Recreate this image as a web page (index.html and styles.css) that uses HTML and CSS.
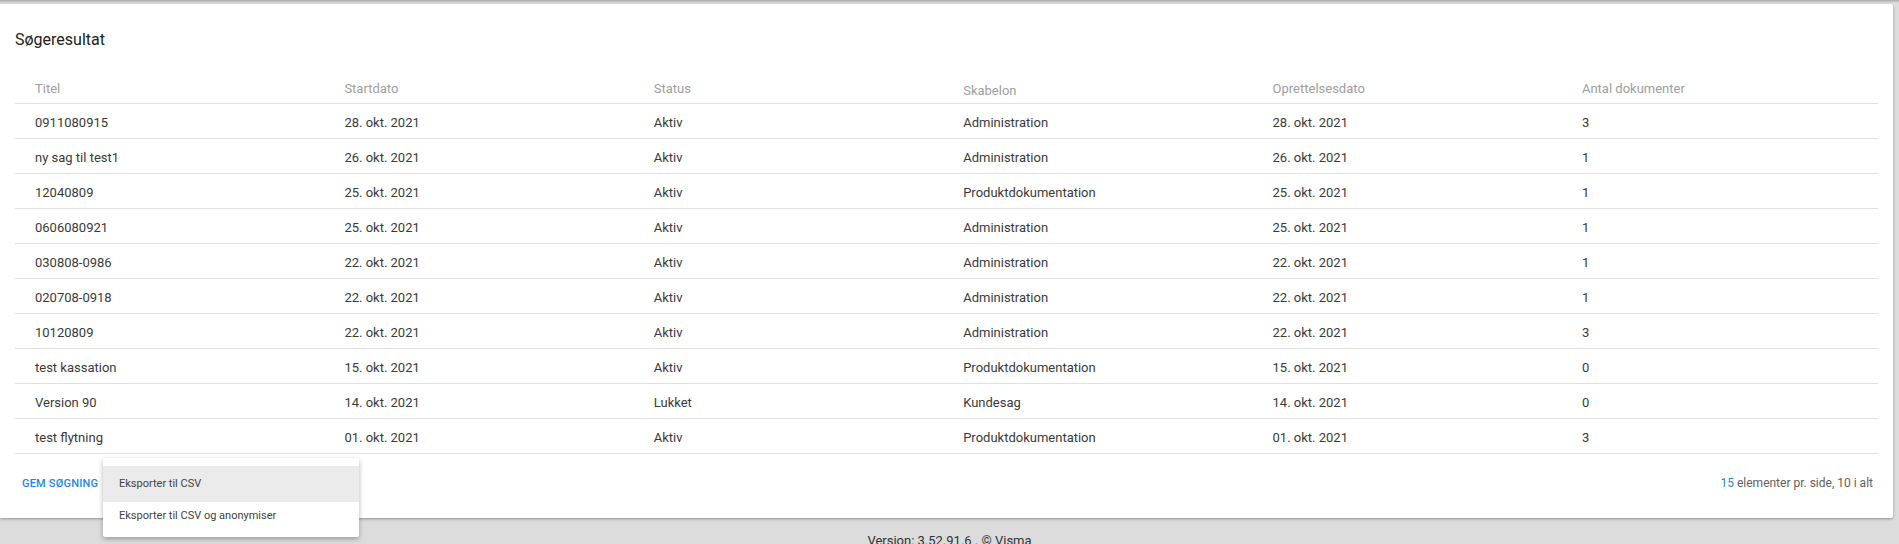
FILE: index.html
```html
<!DOCTYPE html>
<html lang="da">
<head>
<meta charset="utf-8">
<title>Søgeresultat</title>
<link rel="stylesheet" href="styles.css">
</head>
<body>
<div class="topshadow"></div>
<div class="card">
  <h2 class="title">Søgeresultat</h2>
  <table class="results">
    <colgroup>
      <col class="col">
      <col class="col">
      <col class="col">
      <col class="col">
      <col class="col">
      <col class="col-last">
    </colgroup>
    <thead>
      <tr>
        <th>Titel</th>
        <th>Startdato</th>
        <th>Status</th>
        <th class="th-low">Skabelon</th>
        <th>Oprettelsesdato</th>
        <th>Antal dokumenter</th>
      </tr>
    </thead>
    <tbody>
      <tr><td>0911080915</td><td>28. okt. 2021</td><td>Aktiv</td><td>Administration</td><td>28. okt. 2021</td><td>3</td></tr>
      <tr><td>ny sag til test1</td><td>26. okt. 2021</td><td>Aktiv</td><td>Administration</td><td>26. okt. 2021</td><td>1</td></tr>
      <tr><td>12040809</td><td>25. okt. 2021</td><td>Aktiv</td><td>Produktdokumentation</td><td>25. okt. 2021</td><td>1</td></tr>
      <tr><td>0606080921</td><td>25. okt. 2021</td><td>Aktiv</td><td>Administration</td><td>25. okt. 2021</td><td>1</td></tr>
      <tr><td>030808-0986</td><td>22. okt. 2021</td><td>Aktiv</td><td>Administration</td><td>22. okt. 2021</td><td>1</td></tr>
      <tr><td>020708-0918</td><td>22. okt. 2021</td><td>Aktiv</td><td>Administration</td><td>22. okt. 2021</td><td>1</td></tr>
      <tr><td>10120809</td><td>22. okt. 2021</td><td>Aktiv</td><td>Administration</td><td>22. okt. 2021</td><td>3</td></tr>
      <tr><td>test kassation</td><td>15. okt. 2021</td><td>Aktiv</td><td>Produktdokumentation</td><td>15. okt. 2021</td><td>0</td></tr>
      <tr><td>Version 90</td><td>14. okt. 2021</td><td>Lukket</td><td>Kundesag</td><td>14. okt. 2021</td><td>0</td></tr>
      <tr><td>test flytning</td><td>01. okt. 2021</td><td>Aktiv</td><td>Produktdokumentation</td><td>01. okt. 2021</td><td>3</td></tr>
    </tbody>
  </table>
  <div class="actions">
    <button class="text-btn">GEM SØGNING</button>
    <div class="paging"><span class="link">15</span> elementer pr. side, 10 i alt</div>
    <ul class="menu">
      <li class="menu-item active">Eksporter til CSV</li>
      <li class="menu-item last">Eksporter til CSV og anonymiser</li>
    </ul>
  </div>
</div>
<div class="footer">Version: 3.52.91.6 . © Visma</div>
</body>
</html>
```

FILE: styles.css
```css
html, body {
  margin: 0;
  padding: 0;
}
body {
  background: #dcdcdc;
  font-family: Roboto, "Liberation Sans", Arial, sans-serif;
  color: #333;
  height: 544px;
  overflow: hidden;
}
.topshadow {
  height: 4px;
  background: linear-gradient(#a8a8a8, #cfcfcf 50%, #e4e4e4);
}
.card {
  position: relative;
  margin-right: 6px;
  background: #fff;
  border-radius: 0 2px 2px 0;
  box-shadow: 0 1px 3px rgba(0, 0, 0, 0.35);
  padding: 24px 15px 0 15px;
  height: 514px;
  box-sizing: border-box;
}
.title {
  margin: 0;
  font-size: 16px;
  font-weight: 400;
  line-height: 24px;
  color: #212121;
}
.results {
  width: 100%;
  border-collapse: collapse;
  table-layout: fixed;
}
.results .col {
  width: 309.4px;
}
.results th {
  text-align: left;
  font-weight: 400;
  font-size: 13px;
  line-height: 15px;
  color: #9e9e9e;
  padding: 29px 20px 7px 20px;
  border-bottom: 1px solid #e0e0e0;
}
.results th.th-low {
  padding-top: 31px;
  padding-bottom: 5px;
}
.results td {
  font-size: 13px;
  line-height: 15px;
  color: #3a3a3a;
  padding: 11px 20px 8px 20px;
  border-bottom: 1px solid #e0e0e0;
  white-space: nowrap;
}
.actions {
  position: relative;
  height: 64px;
  display: flex;
  align-items: center;
  justify-content: space-between;
  padding: 0 5px 6px 0;
  box-sizing: border-box;
}
.text-btn {
  background: none;
  border: 0;
  padding: 0 7px;
  font-family: inherit;
  font-size: 11px;
  font-weight: 500;
  letter-spacing: 0.2px;
  color: #1e88e5;
  cursor: pointer;
}
.paging {
  font-size: 12px;
  color: #616161;
}
.paging .link {
  color: #1e88e5;
}
.menu {
  position: absolute;
  left: 88px;
  top: 4px;
  width: 256px;
  margin: 0;
  padding: 8px 0 0 0;
  list-style: none;
  background: #fff;
  border-radius: 2px;
  box-shadow: 0 2px 5px rgba(0, 0, 0, 0.3);
  z-index: 5;
}
.menu-item {
  height: 36px;
  line-height: 36px;
  padding: 0 16px;
  font-size: 11px;
  color: #424242;
}
.menu-item.active {
  background: #ebebeb;
}
.menu-item.last {
  height: 35px;
  line-height: 28px;
}
.footer {
  text-align: center;
  font-size: 13px;
  line-height: 20px;
  padding-top: 13px;
  color: #333;
}
```
